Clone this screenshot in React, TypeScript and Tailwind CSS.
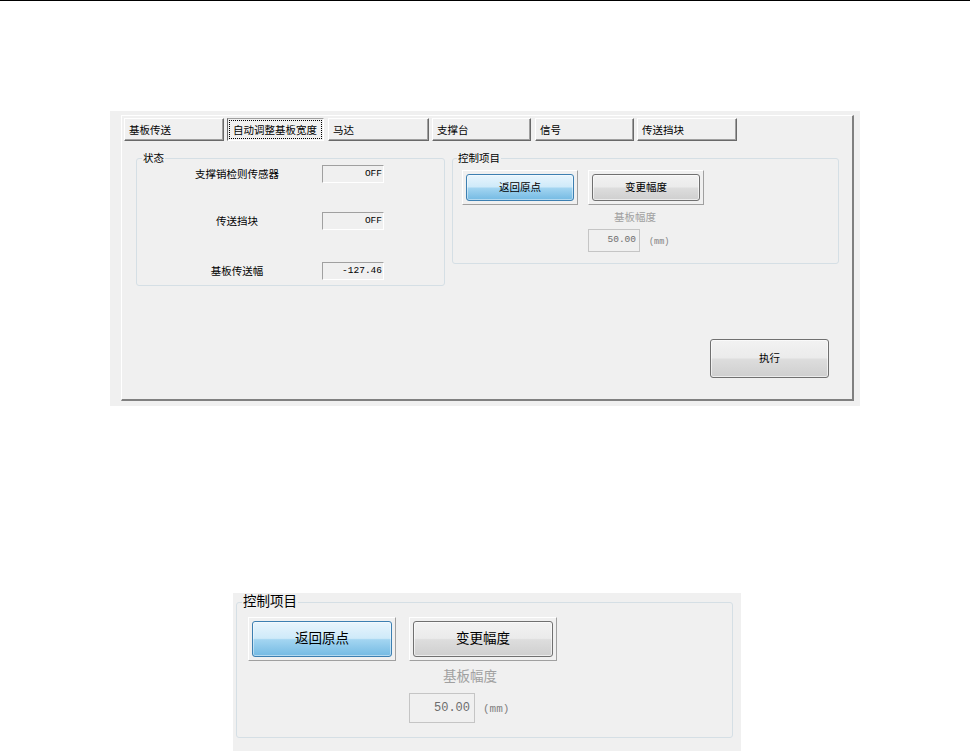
import React from "react";

const tabs = [
  { label: "基板传送", cls: "w-[100px]" },
  { label: "自动调整基板宽度", cls: "w-[97px] ml-[3px]", active: true },
  { label: "马达", cls: "w-[101px] ml-[4px]" },
  { label: "支撑台", cls: "w-[99px] ml-[3px]" },
  { label: "信号", cls: "w-[99px] ml-[4px]" },
  { label: "传送挡块", cls: "w-[100px] ml-[3px]" },
];

const statusRows = [
  { label: "支撑销检则传感器", value: "OFF", cls: "" },
  { label: "传送挡块", value: "OFF", cls: "mt-[29px]" },
  { label: "基板传送幅", value: "-127.46", cls: "mt-[32px]" },
];

const blueInner =
  "w-full h-full rounded-[3px] border border-[#3c7fb1] bg-[linear-gradient(to_bottom,#e8f5fd_0%,#cfeaf9_48%,#a3d5f1_52%,#74bae3_100%)] shadow-[inset_0_0_0_1px_rgba(255,255,255,0.45)] flex items-center justify-center text-black";
const grayInner =
  "w-full h-full rounded-[3px] border border-[#707070] bg-[linear-gradient(to_bottom,#f2f2f2_0%,#ebebeb_48%,#dddddd_52%,#cfcfcf_100%)] shadow-[inset_0_0_0_1px_rgba(255,255,255,0.6)] flex items-center justify-center text-black";

function Tab({ label, cls, active }: { label: string; cls: string; active?: boolean }) {
  if (active) {
    return (
      <div
        className={`${cls} h-[23px] p-[1px] border-t border-l border-r border-b border-t-[#a0a0a0] border-l-[#696969] border-r-white border-b-white flex`}
      >
        <div className="flex-1 h-full border border-dotted border-black flex items-center pl-[3px] text-[10.5px] leading-[14px] whitespace-nowrap">
          {label}
        </div>
      </div>
    );
  }
  return (
    <div
      className={`${cls} h-[23px] flex items-center pl-[4px] border-t border-l border-r border-b border-t-white border-l-white border-r-[#696969] border-b-[#696969] shadow-[inset_-1px_-1px_0_#a0a0a0] text-[10.5px] leading-[14px] whitespace-nowrap`}
    >
      {label}
    </div>
  );
}

function ControlGroupSmall() {
  return (
    <fieldset className="w-[387px] border border-[#d5dfe5] rounded-[3px] pl-[4px] pb-[11px] min-w-0">
      <legend className="px-[1px] text-[10.5px] leading-[14px] text-black">控制项目</legend>
      <div className="flex mt-[5px] ml-[5px] gap-[10px]">
        <div className="w-[116px] h-[35px] p-[3px] border border-t-white border-l-white border-r-[#a0a0a0] border-b-[#a0a0a0]">
          <div className={`${blueInner} text-[10.5px]`}>返回原点</div>
        </div>
        <div className="w-[116px] h-[35px] p-[3px] border border-t-white border-l-white border-r-[#a0a0a0] border-b-[#a0a0a0]">
          <div className={`${grayInner} text-[10.5px]`}>变更幅度</div>
        </div>
      </div>
      <div className="ml-[131px] flex flex-col">
        <div className="mt-[5px] ml-[26px] text-[10.5px] leading-[14px] text-[#a0a0a0]">基板幅度</div>
        <div className="mt-[5px] flex items-center">
          <div className="w-[52px] h-[23px] border border-[#c5c5c5] flex items-center justify-end pr-[3px] font-['Liberation_Mono',monospace] text-[9.5px] text-[#6d6d6d]">
            50.00
          </div>
          <div className="ml-[9px] mt-[3px] text-[8.5px] text-[#808080] font-['Liberation_Mono',monospace]">(mm)</div>
        </div>
      </div>
    </fieldset>
  );
}

function ControlGroupLarge() {
  return (
    <fieldset className="w-[497px] ml-[3px] mt-[5px] border border-[#d5dfe5] rounded-[3px] pl-[5px] pb-[14px] min-w-0">
      <legend className="px-[1px] text-[13.5px] leading-[18px] text-black">控制项目</legend>
      <div className="flex mt-[6px] ml-[6px] gap-[13px]">
        <div className="w-[148px] h-[44px] p-[3px] border border-t-white border-l-white border-r-[#a0a0a0] border-b-[#a0a0a0]">
          <div className={`${blueInner} text-[13.5px]`}>返回原点</div>
        </div>
        <div className="w-[148px] h-[44px] p-[3px] border border-t-white border-l-white border-r-[#a0a0a0] border-b-[#a0a0a0]">
          <div className={`${grayInner} text-[13.5px]`}>变更幅度</div>
        </div>
      </div>
      <div className="ml-[167px] flex flex-col">
        <div className="mt-[7px] ml-[34px] text-[13.5px] leading-[18px] text-[#a0a0a0]">基板幅度</div>
        <div className="mt-[7px] flex items-center">
          <div className="w-[66px] h-[30px] border border-[#c5c5c5] flex items-center justify-end pr-[4px] font-['Liberation_Mono',monospace] text-[12px] text-[#6d6d6d]">
            50.00
          </div>
          <div className="ml-[8px] mt-[3px] text-[11px] text-[#808080] font-['Liberation_Mono',monospace]">(mm)</div>
        </div>
      </div>
    </fieldset>
  );
}

export default function App() {
  return (
    <div className="w-[970px] h-[751px] overflow-hidden bg-white text-black font-['Liberation_Sans','Noto_Sans_CJK_SC',sans-serif]">
      <div className="h-[1px] w-full bg-black" />

      {/* Top panel */}
      <div className="mt-[110px] ml-[110px] w-[750px] h-[295px] bg-[#f0f0f0] pl-[11px] pt-[4px]">
        <div className="w-[733px] h-[286px] border-t border-l border-r-2 border-b-2 border-t-white border-l-white border-r-[#808080] border-b-[#808080] flex flex-col">
          <div className="flex pl-[2px] pt-[2px]">
            {tabs.map((t) => (
              <Tab key={t.label} label={t.label} cls={t.cls} active={t.active} />
            ))}
          </div>

          <div className="flex items-start mt-[10px] ml-[14px] gap-[7px]">
            <fieldset className="w-[309px] border border-[#d5dfe5] rounded-[3px] pl-[5px] pb-[5px] min-w-0">
              <legend className="px-[1px] text-[10.5px] leading-[14px] text-black">状态</legend>
              {statusRows.map((r) => (
                <div key={r.label} className={`flex items-center ml-[13px] ${r.cls}`}>
                  <div className="w-[164px] text-center text-[10.5px] leading-[14px]">{r.label}</div>
                  <div className="ml-[3px] w-[62px] h-[18px] border-t border-l border-r border-b border-t-[#a0a0a0] border-l-[#a0a0a0] border-r-white border-b-white flex items-center justify-end pr-[1px] font-['Liberation_Mono',monospace] text-[9.5px] leading-[12px]">
                    {r.value}
                  </div>
                </div>
              ))}
            </fieldset>
            <ControlGroupSmall />
          </div>

          <div className="self-end mt-[53px] mr-[23px] w-[119px] h-[39px]">
            <div className={`${grayInner} text-[10.5px]`}>执行</div>
          </div>
        </div>
      </div>

      {/* Bottom enlarged inset */}
      <div className="mt-[187px] ml-[233px] w-[508px] h-[158px] bg-[#f0f0f0] pt-0">
        <ControlGroupLarge />
      </div>
    </div>
  );
}
